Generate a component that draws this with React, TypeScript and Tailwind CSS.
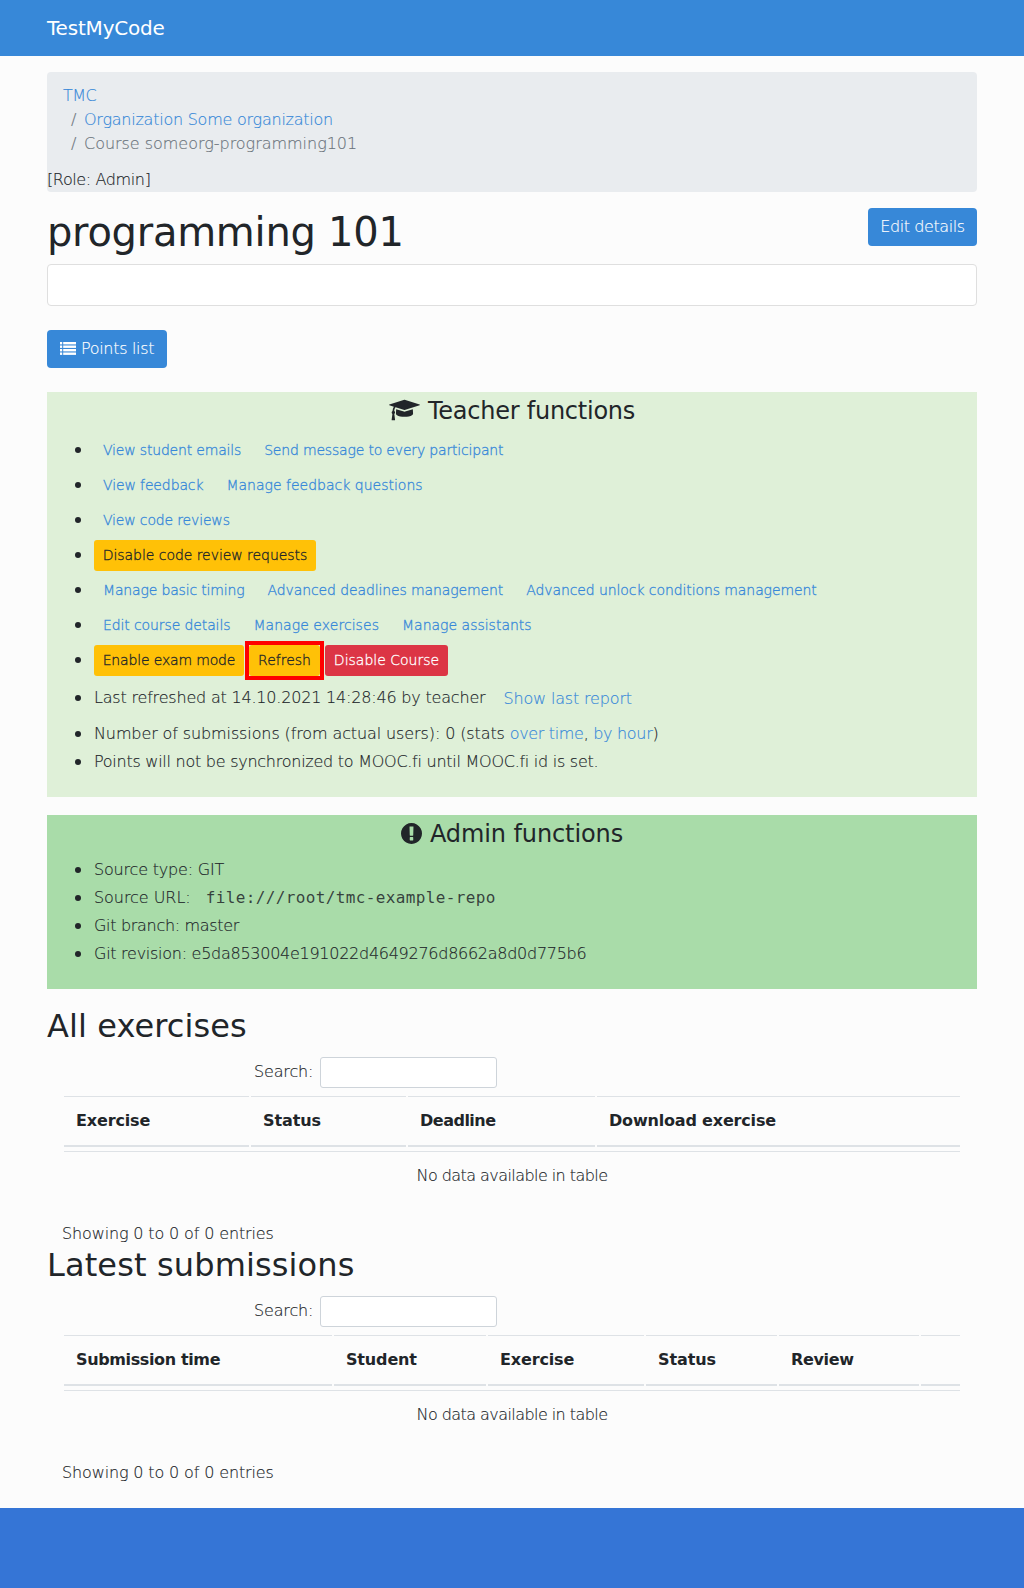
import React from "react";

const sans = "font-['DejaVu_Sans',sans-serif]";

function Row({
  children,
  h = "min-h-[35px]",
  bullet = "mb-[2px]",
}: {
  children: React.ReactNode;
  h?: string;
  bullet?: string;
}) {
  return (
    <li className={`flex items-center ${h}`}>
      <span className={`ml-[27.5px] mr-[13.5px] size-[6px] shrink-0 rounded-full bg-[#212529] ${bullet}`} />
      <div className="flex items-center whitespace-pre">{children}</div>
    </li>
  );
}

function TextRow({ children }: { children: React.ReactNode }) {
  return (
    <Row h="h-7" bullet="mb-0">
      {children}
    </Row>
  );
}

function LinkSm({ children, t = "tracking-normal", w }: { children: React.ReactNode; t?: string; w?: string }) {
  return (
    <a
      className={`mr-[5px] px-[9px] py-[5px] text-sm leading-[21px] text-[#3788d8] [-webkit-text-stroke:0.3px] ${t} ${w ?? ""}`}
    >
      {children}
    </a>
  );
}

function Gradcap() {
  return (
    <svg viewBox="0 0 2304 1792" className="mr-[8px] mb-[2px] h-[24px] w-[31px]" fill="currentColor">
      <path d="M1774 836l18 316q4 69-82 128t-235 93.5-323 34.5-323-34.5-235-93.5-82-128l18-316 574 181q22 7 48 7t48-7zm530-324q0 23-22 31l-1120 352q-4 1-10 1t-10-1l-652-206q-43 34-71 111.5t-34 178.5q63 36 63 109 0 69-58 107l58 433q2 14-8 25-9 11-24 11h-192q-15 0-24-11-10-11-8-25l58-433q-58-38-58-107 0-73 65-111 11-207 98-330l-333-104q-22-8-22-31t22-31l1120-352q4-1 10-1t10 1l1120 352q22 8 22 31z" />
    </svg>
  );
}

function Exclamation() {
  return (
    <svg viewBox="128 128 1536 1536" className="mr-[8px] size-[21px]" fill="currentColor">
      <path d="M896 128q209 0 385.5 103t279.5 279.5 103 385.5-103 385.5-279.5 279.5-385.5 103-385.5-103-279.5-279.5-103-385.5 103-385.5 279.5-279.5 385.5-103zm128 1247v-190q0-14-9-23.5t-22-9.5h-192q-13 0-23 10t-10 23v190q0 13 10 23t23 10h192q13 0 22-9.5t9-23.5zm-2-344l18-621q0-12-10-18-10-8-24-8h-220q-14 0-24 8-10 6-10 18l17 621q0 10 10 17.5t24 7.5h185q14 0 23.5-7.5t10.5-17.5z" />
    </svg>
  );
}

function ListIcon() {
  return (
    <svg viewBox="0 0 16 13" className="mr-[5px] mb-[2px] h-[13px] w-4" fill="currentColor">
      {[0.5, 4, 7.5, 11].map((y) => (
        <React.Fragment key={y}>
          <rect x="0" y={y - 0.5} width="2.2" height="2.4" />
          <rect x="3.2" y={y - 0.5} width="12.8" height="2.4" />
        </React.Fragment>
      ))}
    </svg>
  );
}

function DataTable({ title, t, cols }: { title: string; t: string; cols: { label: string; w: number; t: string }[] }) {
  return (
    <section>
      <h2 className={`mb-2 h-[38.4px] text-[32px] leading-[38.4px] font-normal [-webkit-text-stroke:0] ${t}`}>{title}</h2>
      <div className="px-[15px]">
        <label className="ml-[192px] flex items-center pt-[3.6px]">
          <span className="w-[66px] tracking-[-0.15px]">Search:</span>
          <input className="h-[31px] w-[177px] rounded-[3px] border border-[#ced4da] bg-white" />
        </label>
        <table className="mt-[6px] w-[900px] table-fixed border-separate border-spacing-[2px]">
          <colgroup>
            {cols.map((c, i) => (
              <col key={i} style={{ width: c.w }} />
            ))}
          </colgroup>
          <thead>
            <tr>
              {cols.map((c, i) => (
                <th
                  key={i}
                  className={`h-[51px] border-t border-b-2 border-[#dee2e6] px-3 py-0 text-left leading-6 font-bold [-webkit-text-stroke:0] ${c.t}`}
                >
                  {c.label}
                </th>
              ))}
            </tr>
          </thead>
        </table>
        <div className="mx-[2px] mt-[2px] h-[51px] border-t border-[#dee2e6] pt-3 text-center tracking-[-0.56px]">
          No data available in table
        </div>
        <p className="mt-5 h-6 leading-6 tracking-[-0.135px]">Showing 0 to 0 of 0 entries</p>
      </div>
    </section>
  );
}

export default function App() {
  return (
    <div
      className={`${sans} min-h-[1588px] w-[1024px] bg-[#fcfcfc] text-base font-light text-[#212529] [-webkit-text-stroke:0.15px]`}
    >
      <header className="flex h-14 items-center bg-[#3788d8] pl-[47px] text-xl font-normal tracking-[-0.2px] text-white [-webkit-text-stroke:0]">
        TestMyCode
      </header>
      <main className="mx-[47px] h-[1452px] pt-4">
        <nav className="h-[120px] rounded bg-[#e9ecef]">
          <ol className="px-4 py-3 text-[#6c757d]">
            <li className="tracking-[-0.5px] text-[#3788d8]">TMC</li>
            <li>
              <span className="inline-block w-[21px] pl-2">/</span>
              <a className="tracking-[-0.24px] text-[#3788d8]">Organization Some organization</a>
            </li>
            <li className="tracking-[-0.03px]">
              <span className="inline-block w-[21px] pl-2">/</span>Course someorg-programming101
            </li>
          </ol>
          <div className="tracking-[-0.38px]">[Role: Admin]</div>
        </nav>

        <div className="mt-4 flex items-start justify-between">
          <h1 className="h-12 text-[40px] leading-[48px] font-normal tracking-[-0.27px] [-webkit-text-stroke:0]">
            programming 101
          </h1>
          <button className="h-[38px] w-[109px] rounded bg-[#3788d8] tracking-[-0.42px] text-white">Edit details</button>
        </div>
        <div className="mt-2 h-[42px] rounded border border-[#dfdfdf] bg-white" />
        <button className="mt-6 flex h-[38px] w-[120px] items-center rounded bg-[#3788d8] pl-[13px] tracking-[-0.32px] text-white">
          <ListIcon />
          Points list
        </button>

        <section className="mt-6 h-[405px] bg-[#dff0d8] pt-1">
          <h3 className="mb-2 flex h-[29px] items-center justify-center text-2xl font-normal tracking-[-0.24px] [-webkit-text-stroke:0]">
            <Gradcap />
            Teacher functions
          </h3>
          <ul>
            <Row>
              <LinkSm t="tracking-[-0.18px]">View student emails</LinkSm>
              <LinkSm t="tracking-[-0.18px]">Send message to every participant</LinkSm>
            </Row>
            <Row>
              <LinkSm t="tracking-[-0.12px]">View feedback</LinkSm>
              <LinkSm>Manage feedback questions</LinkSm>
            </Row>
            <Row>
              <LinkSm t="tracking-[-0.16px]">View code reviews</LinkSm>
            </Row>
            <Row>
              <button className="h-[31px] w-[222px] rounded-[3px] bg-[#ffc107] pb-[2px] text-sm tracking-[-0.05px] [-webkit-text-stroke:0.3px]">
                Disable code review requests
              </button>
            </Row>
            <Row>
              <LinkSm t="tracking-[-0.16px]">Manage basic timing</LinkSm>
              <LinkSm t="tracking-[-0.11px]">Advanced deadlines management</LinkSm>
              <LinkSm t="tracking-[-0.09px]">Advanced unlock conditions management</LinkSm>
            </Row>
            <Row>
              <LinkSm t="tracking-[-0.11px]">Edit course details</LinkSm>
              <LinkSm t="tracking-[0.06px]">Manage exercises</LinkSm>
              <LinkSm>Manage assistants</LinkSm>
            </Row>
            <Row>
              <div className="-my-1 flex items-center text-sm [-webkit-text-stroke:0.3px]">
                <button className="h-[31px] w-[150px] rounded-[3px] bg-[#ffc107] pb-[2px] tracking-[-0.16px]">
                  Enable exam mode
                </button>
                <span className="mx-px flex border-4 border-[#ff0000]">
                  <button className="h-[31px] w-[71px] rounded-[3px] bg-[#ffc107] pb-[2px]">Refresh</button>
                </span>
                <button className="h-[31px] w-[123px] rounded-[3px] bg-[#dc3545] pb-[2px] text-white">Disable Course</button>
              </div>
            </Row>
            <Row h="h-[42px] pb-[2px]" bullet="mb-0">
              <span className="tracking-[-0.19px]">Last refreshed at 14.10.2021 14:28:46 by teacher</span>
              <a className="ml-[18px] pt-[2px] tracking-[-0.16px] text-[#3788d8]">Show last report</a>
            </Row>
            <TextRow>
              <span className="tracking-[-0.11px]">Number of submissions (from actual users): 0 (stats </span>
              <a className="tracking-[-0.34px] text-[#3788d8]">over time</a>
              <span className="tracking-[-0.3px]">, </span>
              <a className="tracking-[-0.3px] text-[#3788d8]">by hour</a>)
            </TextRow>
            <TextRow>
              <span className="tracking-[-0.257px]">Points will not be synchronized to MOOC.fi until MOOC.fi id is set.</span>
            </TextRow>
          </ul>
        </section>

        <section className="mt-[18px] h-[174px] bg-[#a9dca9] pt-1">
          <h3 className="mb-2 flex h-[29px] items-center justify-center text-2xl font-normal tracking-[-0.1px] [-webkit-text-stroke:0]">
            <Exclamation />
            Admin functions
          </h3>
          <ul>
            <TextRow>
              <span className="tracking-[-0.19px]">Source type: GIT</span>
            </TextRow>
            <TextRow>
              <span className="tracking-[-0.05px]">Source URL:</span>
              <code className="ml-[15px] font-['DejaVu_Sans_Mono',monospace] tracking-[0.37px] text-[#212529]/85 [-webkit-text-stroke:0]">
                file:///root/tmc-example-repo
              </code>
            </TextRow>
            <TextRow>
              <span className="tracking-[-0.31px]">Git branch: master</span>
            </TextRow>
            <TextRow>
              <span className="tracking-[-0.27px]">Git revision: e5da853004e191022d4649276d8662a8d0d775b6</span>
            </TextRow>
          </ul>
        </section>

        <div className="mt-[18px]">
          <DataTable
            title="All exercises"
            t="tracking-[0.1px]"
            cols={[
              { label: "Exercise", w: 185, t: "tracking-[-0.15px]" },
              { label: "Status", w: 155, t: "tracking-[-0.08px]" },
              { label: "Deadline", w: 187, t: "tracking-[-0.5px]" },
              { label: "Download exercise", w: 363, t: "tracking-[-0.18px]" },
            ]}
          />
          <DataTable
            title="Latest submissions"
            t="tracking-[0.13px]"
            cols={[
              { label: "Submission time", w: 268, t: "tracking-[-0.37px]" },
              { label: "Student", w: 152, t: "tracking-[-0.15px]" },
              { label: "Exercise", w: 156, t: "tracking-[-0.15px]" },
              { label: "Status", w: 131, t: "tracking-[-0.08px]" },
              { label: "Review", w: 140, t: "tracking-[-0.33px]" },
              { label: "", w: 39, t: "tracking-normal" },
            ]}
          />
        </div>
      </main>
      <footer className="h-20 bg-[#3575d6]" />
    </div>
  );
}
